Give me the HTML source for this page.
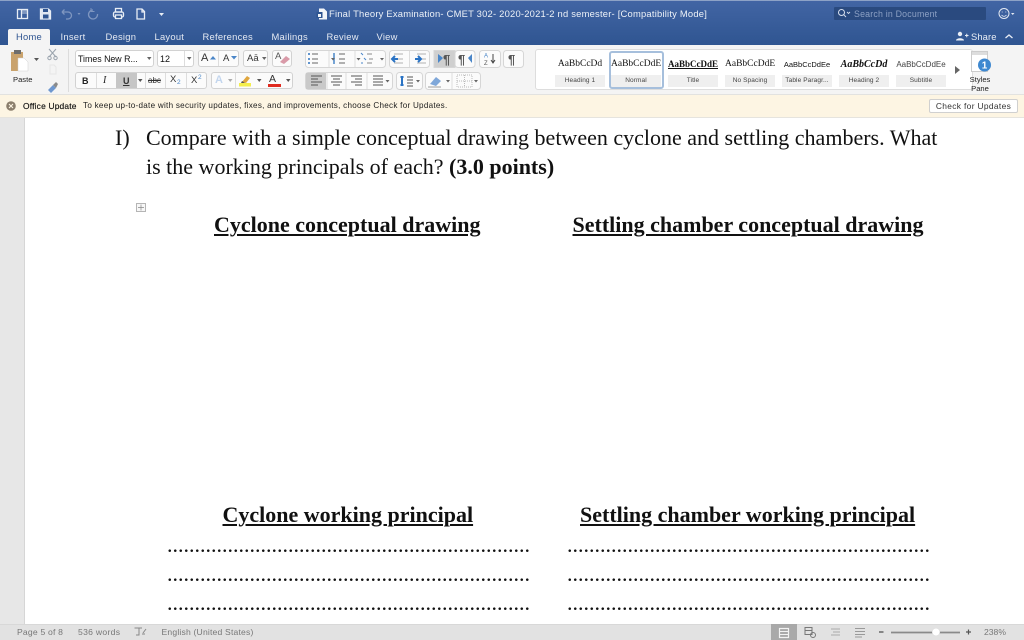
<!DOCTYPE html>
<html><head><meta charset="utf-8"><style>
*{box-sizing:border-box}
html,body{margin:0;padding:0}
body{width:1024px;height:640px;overflow:hidden;position:relative;background:#fff;font-family:"Liberation Sans",sans-serif;color:#333;filter:blur(.3px)}
.a{position:absolute}
.t{position:absolute;white-space:nowrap}
.doc{position:absolute;white-space:nowrap;font-family:"Liberation Serif",serif;color:#111;font-size:22px;line-height:26px}
.b{font-weight:bold;text-decoration:underline;text-decoration-thickness:2px;text-underline-offset:2px}
.box{position:absolute;background:#fbfbfb;border:1px solid #d2d2d2;border-radius:3px}
.sty{position:absolute;top:53px;width:50px;height:34px;background:#fff;border-radius:2px}
.sty i{position:absolute;left:0;right:0;bottom:0;height:12px;background:#efefef;font:normal 6.5px/12px "Liberation Sans",sans-serif;text-align:center;color:#444;letter-spacing:.1px}
.sty b{position:absolute;left:0;right:0;top:5px;text-align:center;font-weight:normal;white-space:nowrap;overflow:hidden;font-family:"Liberation Serif",serif;font-size:9.5px;line-height:13px;color:#111}
svg{position:absolute;overflow:visible}
.tab{position:absolute;white-space:nowrap;top:30px;font-size:9.4px;line-height:13px;color:#e4e9f2;letter-spacing:.25px}
</style></head><body>
<!-- title bar -->
<div class="a" style="left:0;top:0;width:1024px;height:45px;background:linear-gradient(#4265a4,#2f5591)"></div>
<div class="a" style="left:0;top:0;width:1024px;height:1px;background:#8da2c6"></div>
<svg style="left:0;top:0" width="300" height="26" fill="none" stroke="#e8edf5" stroke-width="1.3">
<rect x="17.500" y="9.500" width="10" height="9"/><path d="M21.500 9.500v9"/><path d="M22 11h5M22 13h5" stroke-width=".8"/>
<path d="M40.500 9h8l2 2v8h-10z" fill="#dfe6f1"/><rect x="43" y="9" width="5" height="3" fill="#2f5591" stroke="none"/><rect x="43" y="14.500" width="5.500" height="4" fill="#2f5591" stroke="none"/>
<path d="M62 12h6a3.500 3.500 0 0 1 0 7h-2M62 12l2.500-2.500M62 12l2.500 2.500" stroke="#7f96c0"/><path d="M77.500 13h3l-1.500 2z" fill="#7f96c0" stroke="none"/>
<path d="M93 10a4.500 4.500 0 1 0 4.500 4" stroke="#7f96c0"/><path d="M91 8v3.500h3.500" stroke="#7f96c0" stroke-width=".9"/>
<rect x="113.500" y="12" width="10" height="5" rx="1.500"/><rect x="115.500" y="8.500" width="6" height="3.500"/><rect x="115.500" y="15" width="6" height="3.500" fill="#2f5591"/>
<path d="M137 9h5l2.500 2.500v7.500H137zM142 9v3h2.500"/>
<path d="M159 13h5l-2.500 3z" fill="#e8edf5" stroke="none"/>
</svg>
<svg style="left:316px;top:8px" width="12" height="12"><path d="M3 .5h5l3 3v8H3z" fill="#f3f5f9"/><rect x=".5" y="4" width="6" height="6" fill="#2f5591"/><path d="M2 6h3v3H2z" fill="#f3f5f9"/></svg>
<div class="t" style="left:329px;top:8px;font-size:9.4px;line-height:12px;color:#eef2f8;letter-spacing:.22px">Final Theory Examination- CMET 302- 2020-2021-2 nd semester- [Compatibility Mode]</div>
<div class="a" style="left:834px;top:7px;width:152px;height:13px;background:#2a4a7f;border-radius:1px"></div>
<svg style="left:837px;top:8px" width="14" height="11" fill="none" stroke="#d8e0ee"><circle cx="4.500" cy="4.500" r="3"/><path d="M6.800 6.800l2.200 2.200M10 4l1.500 1.500L13 4" stroke-width=".9"/></svg>
<div class="t" style="left:854px;top:8px;font-size:8.8px;line-height:12px;color:#8ca0c4;letter-spacing:.2px">Search in Document</div>
<svg style="left:997px;top:6px" width="18" height="16" fill="none" stroke="#e4e9f3"><circle cx="7" cy="7.500" r="5"/><circle cx="5.200" cy="6" r=".5" fill="#e4e9f3" stroke="none"/><circle cx="8.800" cy="6" r=".5" fill="#e4e9f3" stroke="none"/><path d="M4.500 9c1.500 1.800 3.500 1.800 5 0" stroke-width=".8"/><path d="M14 7h3.500l-1.750 2z" fill="#e4e9f3" stroke="none"/></svg>
<!-- tabs -->
<div class="a" style="left:8px;top:29px;width:42px;height:16px;background:#f4f4f4;border-radius:2px 2px 0 0"></div>
<div class="tab" style="left:16px;color:#2f5591">Home</div>
<div class="tab" style="left:60.500px">Insert</div>
<div class="tab" style="left:105.500px">Design</div>
<div class="tab" style="left:154.500px">Layout</div>
<div class="tab" style="left:202.500px">References</div>
<div class="tab" style="left:271.500px">Mailings</div>
<div class="tab" style="left:326.500px">Review</div>
<div class="tab" style="left:376.500px">View</div>
<svg style="left:956px;top:31px" width="13" height="10" fill="#e8edf5"><circle cx="4" cy="3" r="2.200"/><path d="M0 9.500c0-3 8-3 8 0z"/><path d="M9 4.500h3.500M10.750 2.700v3.600" stroke="#e8edf5" fill="none"/></svg>
<div class="t" style="left:971px;top:30px;font-size:9.400px;line-height:13px;color:#e8edf5;letter-spacing:.1px">Share</div>
<svg style="left:1004px;top:33px" width="10" height="6" fill="none" stroke="#e8edf5" stroke-width="1.300"><path d="M1.500 5l3.500-3 3.500 3"/></svg>
<!-- ribbon -->
<div class="a" style="left:0;top:45px;width:1024px;height:50px;background:#f4f4f4"></div>
<div class="a" style="left:0;top:94px;width:1024px;height:1px;background:#e2e2e0"></div>
<svg style="left:10px;top:49px" width="28" height="24"><rect x="1" y="3" width="12" height="19" fill="#c9a26c"/><rect x="4" y="1" width="7" height="4" fill="#6d6d6d"/><path d="M8 9h6l4 4v9H8z" fill="#fff" stroke="#cfcfcf" stroke-width=".5"/></svg>
<svg style="left:34px;top:58px" width="5" height="4"><path d="M0 0h5L2.500 3z" fill="#555"/></svg>
<div class="t" style="left:13px;top:74px;font-size:7.600px;line-height:11px;color:#222">Paste</div>
<svg style="left:46px;top:47px" width="14" height="48" fill="none" stroke="#9aa3ad"><path d="M3 2l7 8M10 2l-7 8"/><circle cx="3.500" cy="11" r="1.700"/><circle cx="9.500" cy="11" r="1.700"/><path d="M4 18h4l2 2v7H4z" stroke="#e6e6e6"/><path d="M2 43l5-5 3 3-5 5z" fill="#6e97cf" stroke="none"/><path d="M7 38l3-3 2 2-2 4z" fill="#8a8a8a" stroke="none"/></svg>
<div class="a" style="left:68px;top:49px;width:1px;height:43px;background:#dcdcdc"></div>

<!-- font row -->
<div class="box" style="left:75px;top:50px;width:79px;height:17px;background:#fff"></div>
<div class="t" style="left:78px;top:53px;font-size:8.800px;line-height:12px;color:#111">Times New R...</div>
<svg style="left:147px;top:57px" width="5" height="4"><path d="M0 0h4.500L2.250 3z" fill="#666"/></svg>
<div class="box" style="left:157px;top:50px;width:37px;height:17px;background:#fff"></div>
<div class="a" style="left:184px;top:51px;width:1px;height:15px;background:#ddd"></div>
<div class="t" style="left:160px;top:53px;font-size:9px;line-height:12px;color:#111">12</div>
<svg style="left:187px;top:57px" width="5" height="4"><path d="M0 0h4.500L2.250 3z" fill="#666"/></svg>
<div class="box" style="left:198px;top:50px;width:41px;height:17px"></div><div class="a" style="left:218px;top:51px;width:1px;height:15px;background:#ddd"></div>
<div class="t" style="left:201px;top:52px;font-size:11px;line-height:13px;color:#333">A</div>
<svg style="left:210px;top:56px" width="6" height="4"><path d="M0 3.500L3 0l3 3.500z" fill="#4a86c8"/></svg>
<div class="t" style="left:223px;top:53px;font-size:9.500px;line-height:12px;color:#333">A</div>
<svg style="left:231px;top:56px" width="6" height="4"><path d="M0 0l3 3.500L6 0z" fill="#4a86c8"/></svg>
<div class="box" style="left:243px;top:50px;width:25px;height:17px"></div>
<div class="t" style="left:247px;top:53px;font-size:9.500px;line-height:12px;color:#333">Aā</div>
<svg style="left:262px;top:57px" width="5" height="4"><path d="M0 0h4.500L2.250 3z" fill="#666"/></svg>
<div class="box" style="left:272px;top:50px;width:20px;height:17px"></div>
<div class="t" style="left:275px;top:51px;font-size:9.500px;line-height:12px;color:#555">A</div>
<svg style="left:279px;top:55px" width="12" height="10"><path d="M1 7l6-6 4 3-6 5z" fill="#d99aa8"/></svg>
<!-- format row -->
<div class="box" style="left:75px;top:72px;width:132px;height:17px"></div>
<div class="a" style="left:116px;top:73px;width:21px;height:15px;background:#c6c6c6"></div>
<div class="a" style="left:96px;top:73px;width:1px;height:15px;background:#ddd"></div>
<div class="a" style="left:145px;top:73px;width:1px;height:15px;background:#ddd"></div>
<div class="a" style="left:165px;top:73px;width:1px;height:15px;background:#ddd"></div>
<div class="a" style="left:186px;top:73px;width:1px;height:15px;background:#ddd"></div>
<div class="t" style="left:82px;top:75px;font-size:9px;line-height:12px;font-weight:bold;color:#222">B</div>
<div class="t" style="left:103px;top:75px;font-family:'Liberation Serif';font-style:italic;font-size:10px;line-height:12px;color:#222">I</div>
<div class="t" style="left:123px;top:75px;font-size:9px;line-height:12px;font-weight:bold;color:#333;text-decoration:underline">U</div>
<svg style="left:138px;top:79px" width="5" height="4"><path d="M0 0h4.500L2.250 3z" fill="#555"/></svg>
<div class="t" style="left:148px;top:75px;font-size:8px;line-height:12px;color:#333;text-decoration:line-through">abc</div>
<div class="t" style="left:170px;top:74px;font-size:9.500px;line-height:12px;color:#333">X</div><div class="t" style="left:177px;top:79px;font-size:6.500px;line-height:8px;color:#4a86c8">2</div>
<div class="t" style="left:191px;top:75px;font-size:9.500px;line-height:12px;color:#333">X</div><div class="t" style="left:198px;top:74px;font-size:6.500px;line-height:8px;color:#4a86c8">2</div>
<div class="box" style="left:211px;top:72px;width:82px;height:17px"></div>
<div class="a" style="left:235px;top:73px;width:1px;height:15px;background:#ddd"></div>
<div class="t" style="left:215px;top:74px;font-size:11px;line-height:13px;color:#c3d6ee;font-weight:bold">A</div>
<svg style="left:228px;top:79px" width="5" height="4"><path d="M0 0h4.500L2.250 3z" fill="#aaa"/></svg>
<svg style="left:239px;top:73px" width="14" height="15"><rect x="0" y="10" width="12" height="3.500" fill="#f4ee4c"/><path d="M3 9l5-6 3 2-4 5z" fill="#e0a63e"/><path d="M2 10l1-2 3 2z" fill="#555"/></svg>
<svg style="left:257px;top:79px" width="5" height="4"><path d="M0 0h4.500L2.250 3z" fill="#555"/></svg>
<div class="t" style="left:269px;top:73px;font-size:10.500px;line-height:12px;color:#333">A</div>
<div class="a" style="left:268px;top:84px;width:13px;height:3px;background:#e02b20"></div>
<svg style="left:286px;top:79px" width="5" height="4"><path d="M0 0h4.500L2.250 3z" fill="#555"/></svg>

<!-- paragraph rows -->
<svg style="left:0;top:0" width="530" height="95" fill="none">
<g fill="#fbfbfb" stroke="#d6d6d6"><rect x="305.500" y="50.500" width="80" height="17" rx="3"/><rect x="389.500" y="50.500" width="40" height="17" rx="3"/><rect x="434" y="50.500" width="21" height="17" fill="#cfcfcf"/><rect x="455" y="50.500" width="20" height="17" rx="3"/><rect x="479.500" y="50.500" width="21" height="17" rx="3"/><rect x="503.500" y="50.500" width="20" height="17" rx="3"/>
<rect x="305.500" y="72.500" width="87" height="17" rx="3"/><rect x="396.500" y="72.500" width="26" height="17" rx="3"/><rect x="425.500" y="72.500" width="55" height="17" rx="3"/></g>
<rect x="306" y="73" width="20" height="16" fill="#c9c9c9"/>
<path d="M329 51v16M355 51v16M409.500 51v16M346 73v16M367 73v16M327 73v16M452 73v16" stroke="#ddd"/>
<g stroke="#4a86c8"><path d="M308 54h2M308 59h2M308 63h2" stroke-width="1.800"/></g>
<g stroke="#666"><path d="M312 54h6M312 59h6M312 63h6"/><path d="M339 54h6M339 59h6M339 63h6"/><path d="M367 54h5M369 59h4M367 63h5" stroke="#888"/><path d="M394 54h9M394 59h9M394 63h9" stroke="#999" stroke-width=".8"/><path d="M417 54h9M417 59h9M417 63h9" stroke="#999" stroke-width=".8"/></g>
<path d="M334 53v11" stroke="#4a86c8" stroke-width="1.500"/><path d="M361 53l2 2M364 58l2 2M361 63l2 0" stroke="#4a86c8"/>
<path d="M392 59h6M395 56l-3 3 3 3" stroke="#2a73c4" stroke-width="2"/>
<path d="M415 59h5M418 56l3 3-3 3" stroke="#2a73c4" stroke-width="2"/>
<path d="M438 54l5 4-5 5z" fill="#4a86c8"/>
<text x="443" y="64" font-family="Liberation Sans,sans-serif" font-size="13" font-weight="bold" fill="#555">¶</text>
<text x="458" y="64" font-family="Liberation Sans,sans-serif" font-size="13" font-weight="bold" fill="#555">¶</text>
<path d="M472 54l-4 4 4 5z" fill="#4a86c8"/>
<text x="484" y="57.500" font-family="Liberation Sans,sans-serif" font-size="6" fill="#4a86c8">A</text><text x="484" y="65" font-family="Liberation Sans,sans-serif" font-size="6" fill="#555">Z</text>
<path d="M493 54v8M491 60l2 3 2-3" stroke="#444"/>
<text x="508" y="64" font-family="Liberation Sans,sans-serif" font-size="13" font-weight="bold" fill="#555">¶</text>
<g stroke="#555"><path d="M311 76h11M311 79h7M311 82h11M311 85h7"/><path d="M331 76h11M333 79h7M331 82h11M333 85h7"/><path d="M351 76h11M355 79h7M351 82h11M355 85h7"/><path d="M373 76h10M373 79h10M373 82h10M373 85h10"/></g>
<path d="M402 76v10" stroke="#2a73c4" stroke-width="2"/><path d="M400 77h4M400 85h4" stroke="#2a73c4"/><path d="M407 77h6M407 80h6M407 83h6M407 86h6" stroke="#555"/>
<path d="M430 84l6-7 5 4-5 5z" fill="#7fa7d9"/><path d="M428 87h13" stroke="#ccc" stroke-width="2"/>
<path d="M457 75h15v12h-15zM464.500 75v12M457 81h15" stroke="#bbb" stroke-dasharray="1 1"/>
<g fill="#666"><path d="M331 58h4l-2 2.500z" stroke="none"/><path d="M356.500 58h4l-2 2.500z" stroke="none"/><path d="M380 58h4l-2 2.500z" stroke="none"/><path d="M385.500 80h4l-2 2.500z" stroke="none"/><path d="M416 80h4l-2 2.500z" stroke="none"/><path d="M446 80h4l-2 2.500z" stroke="none"/><path d="M474 80h4l-2 2.500z" stroke="none"/></g>
</svg>

<!-- styles gallery -->
<div class="a" style="left:535px;top:49px;width:438px;height:41px;background:#fff;border:1px solid #ddd;border-radius:3px"></div>
<div class="sty" style="left:555px"><b>AaBbCcDd</b><i>Heading 1</i></div>
<div class="sty" style="left:611px;"><b>AaBbCcDdE</b><i>Normal</i></div>
<div class="a" style="left:609px;top:51px;width:55px;height:38px;border:2px solid #a6bfdc;border-radius:3px"></div>
<div class="sty" style="left:668px"><b style="font-weight:bold;text-decoration:underline;font-size:9px">AaBbCcDdE</b><i>Title</i></div>
<div class="sty" style="left:725px"><b>AaBbCcDdE</b><i>No Spacing</i></div>
<div class="sty" style="left:782px"><b style="font-family:'Liberation Sans';font-size:7.500px">AaBbCcDdEe</b><i>Table Paragr...</i></div>
<div class="sty" style="left:839px"><b style="font-weight:bold;font-style:italic;font-size:10px">AaBbCcDd</b><i>Heading 2</i></div>
<div class="sty" style="left:896px"><b style="font-family:'Liberation Sans';font-size:8px;color:#444">AaBbCcDdEe</b><i>Subtitle</i></div>
<svg style="left:955px;top:66px" width="6" height="8"><path d="M0 0l5 4-5 4z" fill="#666"/></svg>
<svg style="left:970px;top:50px" width="24" height="26"><rect x="1.500" y="1.500" width="16" height="20" fill="#fff" stroke="#ccc"/><rect x="2" y="2" width="15" height="3" fill="#ddd"/><circle cx="14.500" cy="15" r="6.500" fill="#3e88d0"/><text x="14.500" y="18.500" font-family="Liberation Sans,sans-serif" font-size="10" font-weight="bold" fill="#fff" text-anchor="middle">1</text></svg>
<div class="t" style="left:969px;top:75px;font-size:7.600px;line-height:9px;color:#222;text-align:center;width:22px">Styles<br>Pane</div>

<!-- update bar -->
<div class="a" style="left:0;top:95px;width:1024px;height:23px;background:#fdf5e3"></div>
<div class="a" style="left:0;top:117px;width:1024px;height:1px;background:#e6e4de"></div>
<svg style="left:6px;top:101px" width="10" height="10"><circle cx="5" cy="5" r="4.800" fill="#8b7e6c"/><path d="M3 3l4 4M7 3l-4 4" stroke="#fdf5e3" stroke-width="1.100"/></svg>
<div class="t" style="left:23px;top:100px;font-size:8.400px;line-height:12px;color:#111;letter-spacing:.2px;-webkit-text-stroke:.15px #111">Office Update</div>
<div class="t" style="left:83px;top:100px;font-size:8.100px;line-height:12px;color:#222;letter-spacing:.27px">To keep up-to-date with security updates, fixes, and improvements, choose Check for Updates.</div>
<div class="a" style="left:929px;top:99px;width:89px;height:14px;background:#fff;border:1px solid #d0d0d0;border-radius:2px"></div>
<div class="t" style="left:929px;top:100px;width:89px;text-align:center;font-size:8.400px;line-height:12px;color:#333;letter-spacing:.35px">Check for Updates</div>

<!-- document area -->
<div class="a" style="left:0;top:118px;width:25px;height:506px;background:#e7e7e7;border-right:1px solid #d6d6d6"></div>
<div class="doc" style="left:115px;top:125px">I)</div>
<div class="doc" style="left:146px;top:125px">Compare with a simple conceptual drawing between cyclone and settling chambers. What</div>
<div class="doc" style="left:146px;top:154px">is the working principals of each? <b style="text-decoration:none">(3.0 points)</b></div>
<div class="a" style="left:136px;top:203px;width:10px;height:9px;border:1px solid #b5b5b5;background:#f7f7f7"></div>
<svg style="left:136px;top:203px" width="10" height="9"><path d="M5 1.500v6M2 4.500h6" stroke="#888" stroke-width=".7"/></svg>
<div class="doc b" style="left:214px;top:212px">Cyclone conceptual drawing</div>
<div class="doc b" style="left:572.500px;top:212px">Settling chamber conceptual drawing</div>
<div class="doc b" style="left:222.500px;top:502px">Cyclone working principal</div>
<div class="doc b" style="left:580px;top:502px">Settling chamber working principal</div>
<div class="doc" style="left:167px;top:532px">..................................................................</div>
<div class="doc" style="left:567px;top:532px">..................................................................</div>
<div class="doc" style="left:167px;top:561px">..................................................................</div>
<div class="doc" style="left:567px;top:561px">..................................................................</div>
<div class="doc" style="left:167px;top:590px">..................................................................</div>
<div class="doc" style="left:567px;top:590px">..................................................................</div>

<!-- status bar -->
<div class="a" style="left:0;top:624px;width:1024px;height:16px;background:#e2e2e2;border-top:1px solid #d8d8d8"></div>
<div class="t" style="left:17px;top:626px;font-size:8.600px;line-height:12px;color:#777;letter-spacing:.2px">Page 5 of 8</div>
<div class="t" style="left:78px;top:626px;font-size:8.600px;line-height:12px;color:#777;letter-spacing:.3px">536 words</div>
<svg style="left:134px;top:627px" width="14" height="10" fill="none" stroke="#888"><path d="M.5 1h4.500v7H2M5 1h3M8 7h3M9 6l3-4"/></svg>
<div class="t" style="left:161.500px;top:626px;font-size:8.600px;line-height:12px;color:#777;letter-spacing:.18px">English (United States)</div>
<div class="a" style="left:771px;top:624px;width:26px;height:16px;background:#a9a9a9"></div>
<svg style="left:771px;top:624px" width="253" height="16" fill="none">
<rect x="8.500" y="4.500" width="9" height="9" stroke="#f2f2f2" stroke-width="1.200"/><path d="M8.500 7.500h9M8.500 10.500h9" stroke="#f2f2f2"/>
<path d="M34 3.500h7v7h-7zM34 6.500h7" stroke="#777"/><circle cx="42" cy="11" r="2.500" stroke="#777"/>
<path d="M60 5h9M62 8h7M60 11h9" stroke="#a9a9a9"/>
<path d="M84 4.500h10M84 7.500h10M84 10.500h10M84 13h7" stroke="#999"/>
<path d="M108 8h4.500" stroke="#666" stroke-width="1.500"/>
<path d="M120 8.500h69" stroke="#8a8a8a" stroke-width="1.800"/>
<circle cx="165" cy="8" r="3.800" fill="#fff" stroke="#ddd" stroke-width=".5"/>
<path d="M195 8h5M197.500 5.500v5" stroke="#555" stroke-width="1.200"/>
</svg>
<div class="t" style="left:984px;top:626px;font-size:8.600px;line-height:12px;color:#777">238%</div>
</body></html>
